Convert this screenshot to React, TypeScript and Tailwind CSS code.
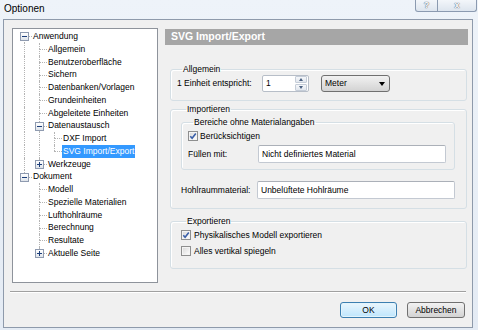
import React from 'react';

type Row = {
  label: string;
  level: number;
  guides: boolean[];
  last: boolean;
  first?: boolean;
  box?: '+' | '-';
  selected?: boolean;
};

const rows: Row[] = [
  { label: 'Anwendung', level: 0, guides: [], last: false, first: true, box: '-' },
  { label: 'Allgemein', level: 1, guides: [true], last: false },
  { label: 'Benutzeroberfläche', level: 1, guides: [true], last: false },
  { label: 'Sichern', level: 1, guides: [true], last: false },
  { label: 'Datenbanken/Vorlagen', level: 1, guides: [true], last: false },
  { label: 'Grundeinheiten', level: 1, guides: [true], last: false },
  { label: 'Abgeleitete Einheiten', level: 1, guides: [true], last: false },
  { label: 'Datenaustausch', level: 1, guides: [true], last: false, box: '-' },
  { label: 'DXF Import', level: 2, guides: [true, true], last: false },
  { label: 'SVG Import/Export', level: 2, guides: [true, true], last: true, selected: true },
  { label: 'Werkzeuge', level: 1, guides: [true], last: true, box: '+' },
  { label: 'Dokument', level: 0, guides: [], last: true, box: '-' },
  { label: 'Modell', level: 1, guides: [false], last: false },
  { label: 'Spezielle Materialien', level: 1, guides: [false], last: false },
  { label: 'Lufthohlräume', level: 1, guides: [false], last: false },
  { label: 'Berechnung', level: 1, guides: [false], last: false },
  { label: 'Resultate', level: 1, guides: [false], last: false },
  { label: 'Aktuelle Seite', level: 1, guides: [false], last: true, box: '+' },
];

const line = 'absolute border-dotted border-[#b4b4b4]';

function TreeRow({ r }: { r: Row }) {
  return (
    <div className="flex h-[12.75px] items-stretch">
      {r.guides.map((g, i) => (
        <div key={i} className="relative w-[15px] shrink-0">
          {g && <div className={`${line} left-[7px] top-0 bottom-0 border-l`} />}
        </div>
      ))}
      <div className="relative w-[15px] shrink-0">
        {!r.first && <div className={`${line} left-[7px] top-0 h-1/2 border-l`} />}
        {!r.last && <div className={`${line} left-[7px] top-1/2 bottom-0 border-l`} />}
        <div className={`${line} left-[7px] right-0 top-1/2 border-t`} />
        {r.box && (
          <span className="absolute left-[3px] top-[calc(50%-4px)] flex h-[9px] w-[9px] items-center justify-center border border-[#8f9bb0] bg-gradient-to-b from-white to-[#dfe4ea]">
            <span className="relative block h-[1px] w-[5px] bg-[#1c3e7a]">
              {r.box === '+' && <span className="absolute left-[2px] top-[-2px] block h-[5px] w-[1px] bg-[#1c3e7a]" />}
            </span>
          </span>
        )}
      </div>
      <span
        className={`flex items-center whitespace-nowrap px-[1px] ${
          r.selected ? 'bg-[#3399ff] text-white' : 'text-black'
        }`}
      >
        {r.label}
      </span>
    </div>
  );
}

function Check({ checked }: { checked?: boolean }) {
  return (
    <svg width="10" height="10" viewBox="0 0 10 10" className="shrink-0">
      <defs>
        <linearGradient id="cbg" x1="0" y1="0" x2="1" y2="1">
          <stop offset="0" stopColor="#dcdcdc" />
          <stop offset="1" stopColor="#fbfbfb" />
        </linearGradient>
      </defs>
      <rect x="0.5" y="0.5" width="9" height="9" fill="#f4f4f4" stroke="#8e8f8f" />
      <rect x="2" y="2" width="6" height="6" fill="url(#cbg)" />
      {checked && (
        <path d="M2.3 5.2 L4.1 7.2 L7.8 2.4" fill="none" stroke="#3a5fa8" strokeWidth="1.6" />
      )}
    </svg>
  );
}

function Field({ children, className = '' }: { children: React.ReactNode; className?: string }) {
  return (
    <div
      className={`flex h-[18px] items-center rounded-[2px] border border-[#c3c9d2] border-t-[#abb0b8] bg-white pl-[3px] ${className}`}
    >
      {children}
    </div>
  );
}

const group = 'rounded-[3px] border border-[#d5dfe5] shadow-[inset_1px_1px_0_#fff]';

export default function App() {
  return (
    <div className="flex h-[330px] w-[478px] flex-col overflow-hidden bg-gradient-to-b from-[#eef3f9] to-[#e4ebf4] font-['Liberation_Sans',Arial,sans-serif] text-[8.5px] text-black">
      <div className="flex h-[19px] shrink-0 items-start justify-between">
        <span className="ml-[4px] mt-[3px] text-[10px] leading-[12px] text-black">Optionen</span>
        <div className="mr-[1px] flex h-[12px]">
          <div className="flex w-[23px] items-center justify-center rounded-bl-[3px] border border-t-0 border-[#8b9ab0] bg-gradient-to-b from-[#f3f6fa] to-[#dde5ee] text-[9px] font-bold text-white [text-shadow:0_0_1px_#4d5b6e,0_0_1px_#4d5b6e]">
            ?
          </div>
          <div className="flex w-[39px] items-center justify-center rounded-br-[3px] border border-l-0 border-t-0 border-[#8b9ab0] bg-gradient-to-b from-[#f3f6fa] to-[#dde5ee] text-[9px] font-bold text-white [text-shadow:0_0_1px_#4d5b6e,0_0_1px_#4d5b6e]">
            x
          </div>
        </div>
      </div>

      <div className="mb-[2px] ml-[3px] mr-[5px] flex flex-1 flex-col border border-[#8e9aab] bg-[#f0f0f0] pl-[8px] pr-[3px] pt-[8px]">
        <div className="flex gap-[7px]">
          <div className="h-[255px] w-[146px] shrink-0 border border-[#8e939b] bg-white pl-[4px] pt-[1px]">
            {rows.map((r) => (
              <TreeRow key={r.label} r={r} />
            ))}
          </div>

          <div className="flex w-[303px] flex-col">
            <div className="mt-[1px] flex h-[16px] items-center bg-[#a6a6a6] pl-[6px] text-[10.5px] font-bold text-white">
              SVG Import/Export
            </div>

            <fieldset className={`${group} ml-[5px] mr-[1px] mt-[19px] pb-[8px] pl-[6px]`}>
              <legend className="ml-[5px] px-[1px] leading-[11px]">Allgemein</legend>
              <div className="flex h-[17px] items-center">
                <span className="w-[85px]">1 Einheit entspricht:</span>
                <div className="flex h-[17px] w-[47px] items-center rounded-[2px] border border-[#b7bec8] bg-white pl-[3px]">
                  <span className="flex-1">1</span>
                  <div className="mr-[1px] flex h-[15px] w-[12px] flex-col gap-[1px]">
                    <div className="flex flex-1 items-center justify-center rounded-[1px] border border-[#c5cdd8] bg-gradient-to-b from-[#f5f7fa] to-[#e2e7ee]">
                      <span className="block h-0 w-0 border-x-[2.5px] border-b-[3px] border-x-transparent border-b-[#4a6080]" />
                    </div>
                    <div className="flex flex-1 items-center justify-center rounded-[1px] border border-[#c5cdd8] bg-gradient-to-b from-[#f5f7fa] to-[#e2e7ee]">
                      <span className="block h-0 w-0 border-x-[2.5px] border-t-[3px] border-x-transparent border-t-[#4a6080]" />
                    </div>
                  </div>
                </div>
                <div className="ml-[12px] flex h-[17px] w-[69px] items-center justify-between rounded-[3px] border border-[#707070] bg-gradient-to-b from-[#f2f2f2] to-[#d3d3d3] pl-[3px] pr-[4px]">
                  <span>Meter</span>
                  <span className="block h-0 w-0 border-x-[3.5px] border-t-[4px] border-x-transparent border-t-black" />
                </div>
              </div>
            </fieldset>

            <fieldset className={`${group} ml-[5px] mr-[1px] mt-[3px] pb-[9px] pl-[10px] pr-[11px]`}>
              <legend className="ml-[5px] px-[1px] leading-[11px]">Importieren</legend>
              <fieldset className={`${group} mt-[2px] pb-[6px] pl-[6px] pr-[8px]`}>
                <legend className="ml-[5px] px-[1px] leading-[11px]">Bereiche ohne Materialangaben</legend>
                <div className="mt-[2px] flex h-[12px] items-center gap-[2px]">
                  <Check checked />
                  <span>Berücksichtigen</span>
                </div>
                <div className="mt-[3px] flex items-center">
                  <span className="w-[70px] shrink-0">Füllen mit:</span>
                  <Field className="flex-1">Nicht definiertes Material</Field>
                </div>
              </fieldset>
              <div className="mt-[11px] flex items-center">
                <span className="w-[76px] shrink-0">Hohlraummaterial:</span>
                <Field className="flex-1">Unbelüftete Hohlräume</Field>
              </div>
            </fieldset>

            <fieldset className={`${group} ml-[5px] mr-[1px] mt-[7px] pb-[11px] pl-[10px]`}>
              <legend className="ml-[5px] px-[1px] leading-[11px]">Exportieren</legend>
              <div className="mt-[2px] flex h-[12px] items-center gap-[3px]">
                <Check checked />
                <span>Physikalisches Modell exportieren</span>
              </div>
              <div className="mt-[4px] flex h-[12px] items-center gap-[3px]">
                <Check />
                <span>Alles vertikal spiegeln</span>
              </div>
            </fieldset>
          </div>
        </div>

        <div className="-ml-[2px] mr-[3px] mt-[8px] h-[2px] border-t border-b border-t-[#a0a0a0] border-b-white" />

        <div className="mt-[9px] flex justify-end gap-[10px] pr-[4px]">
          <button className="flex h-[16px] w-[57px] items-center justify-center rounded-[3px] border border-[#3c7fb1] bg-gradient-to-b from-[#eaf6fd] to-[#bee6fd] text-[8.5px] shadow-[inset_0_0_0_1px_#e3f4fc]">
            OK
          </button>
          <button className="flex h-[16px] w-[58px] items-center justify-center rounded-[3px] border border-[#707070] bg-gradient-to-b from-[#f2f2f2] to-[#d3d3d3] text-[8.5px]">
            Abbrechen
          </button>
        </div>
      </div>
    </div>
  );
}
